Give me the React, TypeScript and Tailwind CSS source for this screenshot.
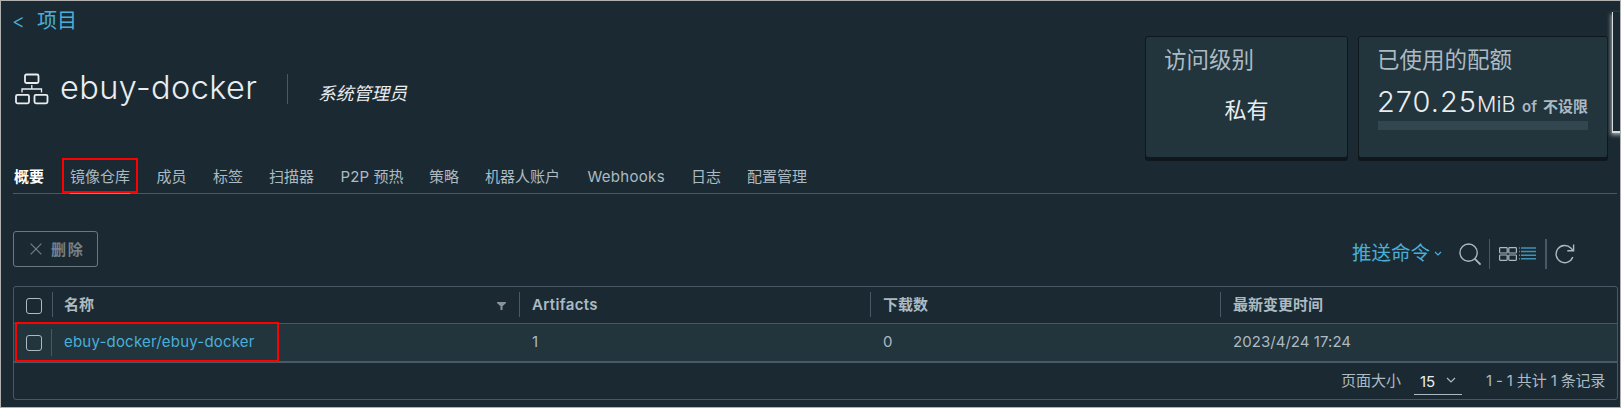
import React from 'react';

const FONT = "font-[Inter,'Noto_Sans_CJK_SC',sans-serif]";

const tabs = [
  { label: '概要', width: 'w-[56px]', active: true },
  { label: '镜像仓库', width: 'w-[86.5px]', marked: true },
  { label: '成员', width: 'w-[56.5px]' },
  { label: '标签', width: 'w-[56px]' },
  { label: '扫描器', width: 'w-[71.5px]' },
  { label: 'P2P 预热', width: 'w-[88.5px]', spacing: 'tracking-[0.1px]' },
  { label: '策略', width: 'w-[56px]' },
  { label: '机器人账户', width: 'w-[102.5px]' },
  { label: 'Webhooks', width: 'w-[103.5px]', spacing: 'tracking-[0.3px]' },
  { label: '日志', width: 'w-[56px]' },
  { label: '配置管理', width: 'w-[60px]' },
];

function ProjectIcon() {
  return (
    <svg width="34" height="32" viewBox="0 0 34 32" fill="none" stroke="#eaedf0" strokeWidth="1.8">
      <rect x="10" y="1.500" width="13.500" height="8.500" rx="1.5" />
      <rect x="1" y="21.800" width="13" height="8.500" rx="1.5" />
      <rect x="19.500" y="21.800" width="13" height="8.500" rx="1.5" />
      <path d="M16.800 12v4M7 19.500v-3.500h19.500v3.500" strokeWidth="1.3" />
    </svg>
  );
}

function Separator({ className = '' }: { className?: string }) {
  return <span className={`shrink-0 bg-[#495865] ${className}`} />;
}

function Checkbox() {
  return <span className="block size-4 rounded-[3px] border border-[#acbac3]" />;
}

function Card({ children, className }: { children: React.ReactNode; className: string }) {
  return (
    <div className={`h-[122px] rounded-[3px] border border-[#0f171c] bg-[#22343c] shadow-[0_3px_0_0_#0f171c] ${className}`}>
      {children}
    </div>
  );
}

export default function App() {
  return (
    <div className={`relative flex h-[408px] w-[1621px] flex-col overflow-hidden border border-[#b0b0b0] bg-[#1b2a32] text-[15px] leading-none text-[#acbac3] ${FONT}`}>
      <header className="flex h-[157px] shrink-0 justify-between">
        <div className="flex flex-col pl-3">
          <a className="mt-[9px] flex h-[22px] items-center text-[20px] text-[#49afd9]">
            <span className="-ml-px w-[25px] text-[20px] font-light">&lt;</span>项目
          </a>
          <div className="mt-[41px] flex h-8 items-center">
            <span className="ml-[2px]"><ProjectIcon /></span>
            <h1 className="ml-[11px] w-[227px] -translate-y-[1px] whitespace-nowrap text-[32.5px] font-light tracking-[0.4px] text-[#eaedf0]">ebuy-docker</h1>
            <Separator className="h-[30px] w-px" />
            <span className="ml-[30px] mt-[9px] text-[17.8px] italic text-[#eaedf0]">系统管理员</span>
          </div>
        </div>
        <div className="flex gap-[10px] pr-[12px] pt-[35px]">
          <Card className="w-[203px] px-[18px] pt-[12px]">
            <h2 className="text-[22.5px]">访问级别</h2>
            <p className="mt-[27px] text-center text-[22px] text-[#eaedf0]">私有</p>
          </Card>
          <Card className="w-[250px] px-[19px] pt-[12px]">
            <h2 className="-ml-px text-[22.5px]">已使用的配额</h2>
            <div className="mt-[16px] flex h-[28px] w-[210px] items-baseline whitespace-nowrap">
              <span className="-ml-px w-[100px] text-[29px] font-light leading-[28px] tracking-[1px] text-[#eaedf0]">270.25</span>
              <span className="w-[45px] text-[21.5px] font-light tracking-[0.1px] text-[#eaedf0]">MiB</span>
              <span className="w-[21px] font-semibold">of</span>
              <span className="font-bold">不设限</span>
            </div>
            <div className="mt-[5px] h-[9px] w-[210px] bg-[#324650]" />
          </Card>
        </div>
      </header>

      <nav className="ml-3 mr-[3px] flex h-[36px] shrink-0 border-b border-[#495865] pl-px">
        {tabs.map((t) => (
          <div key={t.label} className={`relative pt-[11px] whitespace-nowrap ${t.width} ${t.spacing ?? ''} ${t.active ? 'font-bold text-white' : ''}`}>
            {t.label}
            {t.marked && <span className="absolute bottom-[-1px] left-0 h-[2px] w-[60px] bg-[#6f9ab5]" />}
            {t.marked && <span className="absolute -left-2 top-0 h-[35px] w-[76px] border-2 border-[#ff0000]" />}
          </div>
        ))}
      </nav>

      <div className="flex h-[92px] shrink-0 items-start justify-between pl-3">
        <button className="mt-[37px] flex h-[36px] w-[85px] items-center rounded-[3px] border border-[#6c787f] pl-[16px] font-bold tracking-[1.8px] text-[#758188]">
          <svg width="12" height="12" viewBox="0 0 13 13" stroke="#758188" strokeWidth="1.2"><path d="M.7.7l11.600 11.600M12.300.7L.7 12.300" /></svg>
          <span className="ml-[9px]">删除</span>
        </button>
        <div className="mr-[45px] mt-[44px] flex h-[31px] items-center">
          <span className="pt-px text-[19.5px] text-[#49afd9]">推送命令</span>
          <svg className="ml-[4px]" width="8" height="6" viewBox="0 0 8 6" fill="none" stroke="#49afd9" strokeWidth="1.2"><path d="M1 1l3 3 3-3" /></svg>
          <svg className="ml-[17px] mt-[2px]" width="23" height="23" viewBox="0 0 24 24" fill="none" stroke="#acbac3" strokeWidth="1.4"><circle cx="10" cy="10" r="9" /><path d="M16.500 16.500l6 6" strokeWidth="1.8" /></svg>
          <Separator className="ml-[7px] h-[30px] w-px" />
          <svg className="ml-[9px]" width="18" height="14" viewBox="0 0 18 14" fill="none" stroke="#acbac3" strokeWidth="1.2"><rect x=".6" y=".6" width="7.600" height="5.400" rx=".8" /><rect x="9.800" y=".6" width="7.600" height="5.400" rx=".8" /><rect x=".6" y="8" width="7.600" height="5.400" rx=".8" /><rect x="9.800" y="8" width="7.600" height="5.400" rx=".8" /></svg>
          <svg className="ml-[2px]" width="17" height="13" viewBox="0 0 17 13" stroke="#3f93b5" strokeWidth="1.5"><path d="M0 1h1M2 1h15M0 4.600h1M2 4.600h15M0 8.200h1M2 8.200h15M0 11.800h1M2 11.800h15" /></svg>
          <Separator className="ml-[9px] h-[30px] w-[2px]" />
          <svg className="ml-[8px]" width="20" height="20" viewBox="0 0 20 20" fill="none" stroke="#acbac3" strokeWidth="1.4"><path d="M17.800 13a8.600 8.600 0 1 1-2-9l2.200 2.400M18.600.5v6.300h-6.300" /></svg>
        </div>
      </div>

      <section className="relative ml-3 flex h-[114px] w-[1605px] shrink-0 flex-col rounded-[3px] border border-[#495865]">
        <div className="flex h-[37px] shrink-0 items-center border-b border-[#495865] pb-[1px] font-bold">
          <div className="w-[38px] pl-3 pt-[2px]"><Checkbox /></div>
          <Separator className="h-[25px] w-px" />
          <div className="flex w-[466px] items-center justify-between pl-[11px] pr-[13px]">
            名称
            <svg className="mt-[3px]" width="9" height="8" viewBox="0 0 9 8" fill="#8c9398"><path d="M0 0h9v1L5.500 4.200V8h-2V4.200L0 1z" /></svg>
          </div>
          <Separator className="h-[25px] w-px" />
          <div className="w-[350px] pl-[12px] font-semibold tracking-[0.35px]">Artifacts</div>
          <Separator className="h-[25px] w-px" />
          <div className="w-[349px] pl-[12px]">下载数</div>
          <Separator className="h-[25px] w-px" />
          <div className="pl-[12px]">最新变更时间</div>
        </div>
        <div className="flex h-[39px] shrink-0 items-center border-b-2 border-[#495865] bg-[#22343c]">
          <div className="w-[37px] pl-3"><Checkbox /></div>
          <Separator className="h-[27px] w-px" />
          <div className="w-[480px] pb-[2px] pl-[12px] tracking-[0.2px] text-[#49afd9]">ebuy-docker/ebuy-docker</div>
          <div className="w-[351px] pb-[2px]">1</div>
          <div className="w-[350px] pb-[2px]">0</div>
          <div className="pb-[2px] tracking-[0.05px]">2023/4/24 17:24</div>
        </div>
        <footer className="flex flex-1 items-center justify-end pb-[2px] pr-[12px]">
          <span>页面大小</span>
          <span className="ml-[13px] flex h-[25px] w-[48px] translate-y-[2px] items-center justify-between border-b border-[#acbac3] pl-[6px] pr-[6px] text-[#eaedf0]">
            15
            <svg className="-mt-[4px]" width="10" height="6" viewBox="0 0 10 6" fill="none" stroke="#acbac3" strokeWidth="1.2"><path d="M1 1l4 4 4-4" /></svg>
          </span>
          <span className="ml-[24px] w-[119px] whitespace-nowrap tracking-[-0.15px]">1 - 1 共计 1 条记录</span>
        </footer>
        <span className="absolute left-[1px] top-[35px] h-[40px] w-[264px] border-2 border-[#ff0000]" />
      </section>

      <div className="absolute left-[1611px] top-[11px] h-[121px] w-[20px] border-b-2 border-l border-[#d8dcde] shadow-[-1px_2px_4px_0_#a0a6aa]" />
    </div>
  );
}
